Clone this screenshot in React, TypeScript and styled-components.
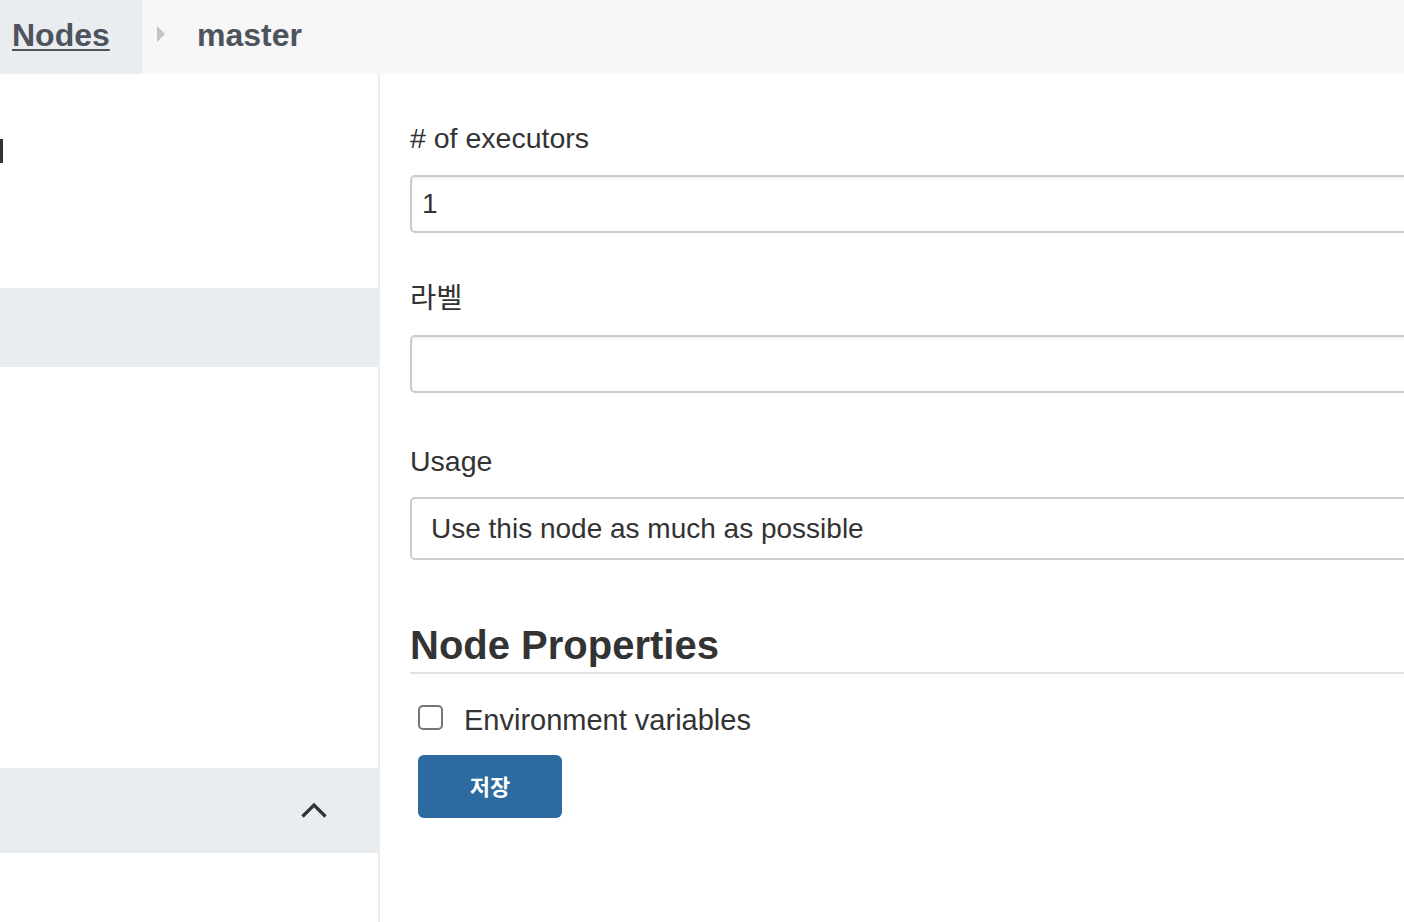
import React from "react";
import styled, { createGlobalStyle } from "styled-components";

const Global = createGlobalStyle`
  html, body {
    margin: 0;
    padding: 0;
    height: 922px;
    overflow: hidden;
    background: #ffffff;
    font-family: "Liberation Sans", "Noto Sans CJK KR", Arial, sans-serif;
    color: #333333;
  }
  * { box-sizing: border-box; }
`;

const Page = styled.div`
  display: flex;
  flex-direction: column;
  width: 1404px;
  height: 922px;
  overflow: hidden;
`;

const Breadcrumbs = styled.nav`
  display: flex;
  align-items: stretch;
  height: 74px;
  background: #f7f7f7;
  flex-shrink: 0;
`;

const Crumb = styled.div<{ $active?: boolean }>`
  display: flex;
  align-items: center;
  padding: 0 0 4px 12px;
  width: ${(p) => (p.$active ? "142px" : "auto")};
  background: ${(p) => (p.$active ? "#e9edf0" : "transparent")};
  font-size: 32px;
  font-weight: 700;
  line-height: 40px;
  color: #4d545d;
`;

const CrumbLink = styled.a`
  color: #4d545d;
  text-decoration: underline;
  text-decoration-thickness: 2px;
  text-underline-offset: 3px;
`;

const Separator = styled.span`
  display: flex;
  align-items: center;
  padding: 0 20px 6px 15px;
`;

const Triangle = styled.span`
  width: 0;
  height: 0;
  border-top: 8px solid transparent;
  border-bottom: 8px solid transparent;
  border-left: 8px solid #c4c4c4;
`;

const Body = styled.div`
  display: flex;
  flex: 1;
  min-height: 0;
`;

const Sidebar = styled.aside`
  width: 380px;
  flex-shrink: 0;
  border-right: 2px solid #e9edf0;
  display: flex;
  flex-direction: column;
`;

const SidebarTop = styled.div`
  height: 214px;
  padding-top: 65px;
`;

const ClippedGlyph = styled.span`
  display: block;
  width: 3px;
  height: 24px;
  background: #333333;
`;

const SidebarItem = styled.div<{ $height: number }>`
  height: ${(p) => p.$height}px;
  background: #e9edf0;
  display: flex;
  align-items: center;
  justify-content: flex-end;
  padding: 0 51px 2px 0;
`;

const SidebarSpacer = styled.div<{ $height: number }>`
  height: ${(p) => p.$height}px;
`;

const Main = styled.main`
  flex: 1;
  overflow: hidden;
  padding: 47px 0 0 30px;
`;

const Field = styled.div<{ $gap: number }>`
  margin-bottom: ${(p) => p.$gap}px;
`;

const Label = styled.label<{ $gap?: number }>`
  display: block;
  font-size: 28.5px;
  line-height: 34px;
  color: #333333;
  margin-bottom: ${(p) => p.$gap ?? 20}px;
`;

const TextInput = styled.input`
  display: block;
  width: 1100px;
  height: 58px;
  border: 2px solid #cccccc;
  border-radius: 5px;
  box-shadow: inset 0 2px 3px rgba(0, 0, 0, 0.06);
  padding: 0 10px;
  font-family: "Liberation Sans", "Noto Sans CJK KR", Arial, sans-serif;
  font-size: 28px;
  color: #333333;
  background: #ffffff;
  outline: none;
`;

const Select = styled.select`
  display: block;
  width: 1100px;
  height: 63px;
  border: 2px solid #cccccc;
  border-radius: 5px;
  padding: 0 19px;
  font-family: "Liberation Sans", "Noto Sans CJK KR", Arial, sans-serif;
  font-size: 28px;
  color: #333333;
  background: #ffffff;
  appearance: none;
  -webkit-appearance: none;
  outline: none;
`;

const SectionHeading = styled.h2`
  width: 1100px;
  margin: 0 0 29px 0;
  padding-bottom: 3px;
  font-size: 40px;
  line-height: 48px;
  font-weight: 700;
  color: #333333;
  border-bottom: 2px solid #e2e2e2;
`;

const CheckRow = styled.div`
  display: flex;
  align-items: flex-start;
  padding-left: 8px;
  margin-bottom: 18px;
`;

const CheckBox = styled.span`
  width: 25px;
  height: 25px;
  margin-top: 2px;
  border: 2px solid #767676;
  border-radius: 5px;
  background: #ffffff;
  flex-shrink: 0;
`;

const CheckLabel = styled.span`
  margin-left: 21px;
  font-size: 29px;
  line-height: 34px;
  color: #333333;
`;

const PrimaryButton = styled.button`
  margin-left: 8px;
  width: 144px;
  height: 63px;
  border: none;
  border-radius: 6px;
  background: #2d6a9f;
  color: #ffffff;
  font-family: "Liberation Sans", "Noto Sans CJK KR", Arial, sans-serif;
  font-size: 22px;
  font-weight: 700;
  padding-bottom: 4px;
`;

const ChevronUp = () => (
  <svg width="26" height="16" viewBox="0 0 26 16" fill="none">
    <polyline
      points="1.5,14.5 13,3 24.5,14.5"
      stroke="#333333"
      strokeWidth="3.2"
      strokeLinejoin="miter"
    />
  </svg>
);

export default function App() {
  return (
    <>
      <Global />
      <Page>
        <Breadcrumbs>
          <Crumb $active>
            <CrumbLink>Nodes</CrumbLink>
          </Crumb>
          <Separator>
            <Triangle />
          </Separator>
          <Crumb>master</Crumb>
        </Breadcrumbs>
        <Body>
          <Sidebar>
            <SidebarTop>
              <ClippedGlyph />
            </SidebarTop>
            <SidebarItem $height={79} />
            <SidebarSpacer $height={401} />
            <SidebarItem $height={85}>
              <ChevronUp />
            </SidebarItem>
          </Sidebar>
          <Main>
            <Field $gap={48}>
              <Label># of executors</Label>
              <TextInput defaultValue="1" />
            </Field>
            <Field $gap={51}>
              <Label>라벨</Label>
              <TextInput defaultValue="" />
            </Field>
            <Field $gap={61}>
              <Label $gap={19}>Usage</Label>
              <Select defaultValue="normal">
                <option value="normal">Use this node as much as possible</option>
                <option value="exclusive">Only build jobs with label expressions matching this node</option>
              </Select>
            </Field>
            <SectionHeading>Node Properties</SectionHeading>
            <CheckRow>
              <CheckBox />
              <CheckLabel>Environment variables</CheckLabel>
            </CheckRow>
            <PrimaryButton>저장</PrimaryButton>
          </Main>
        </Body>
      </Page>
    </>
  );
}
